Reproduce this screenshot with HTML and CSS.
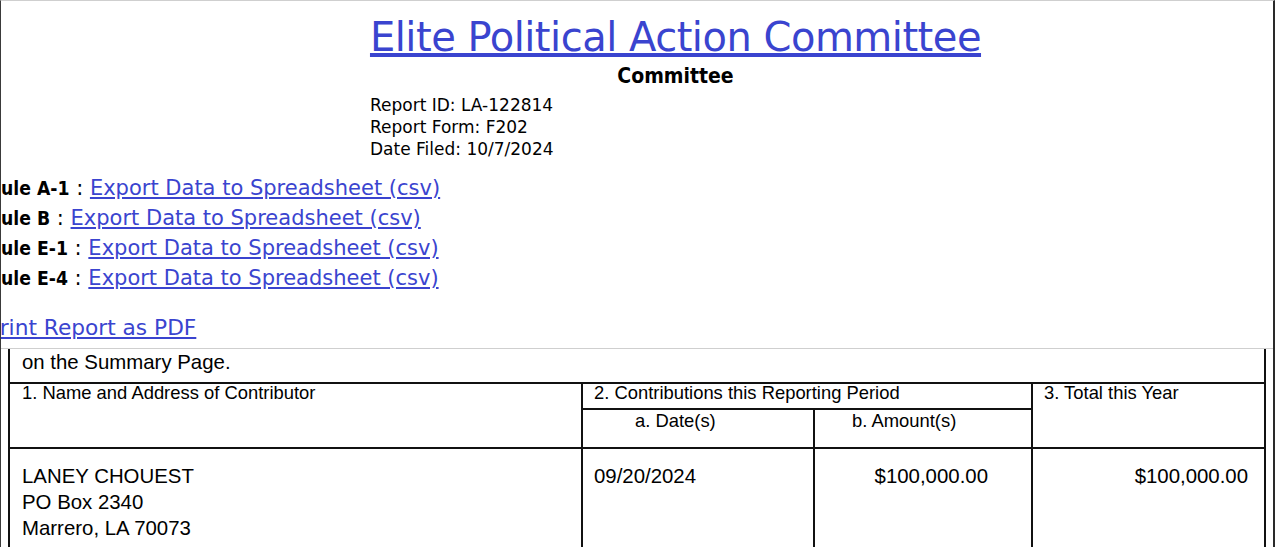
FILE: index.html
```html
<!DOCTYPE html>
<html>
<head>
<meta charset="utf-8">
<link rel="stylesheet" href="styles.css">
</head>
<body>
<div class="frame">
  <div class="top">
    <div class="head">
      <a class="title" href="#">Elite Political Action Committee</a>
      <div class="subtitle">Committee</div>
    </div>
    <div class="info">
      <div>Report ID: LA-122814</div>
      <div>Report Form: F202</div>
      <div>Date Filed: 10/7/2024</div>
    </div>
    <div class="schedules">
      <div class="sched"><b class="lbl">Schedule A-1</b> : <a href="#">Export Data to Spreadsheet (csv)</a></div>
      <div class="sched"><b class="lbl">Schedule B</b> : <a href="#">Export Data to Spreadsheet (csv)</a></div>
      <div class="sched"><b class="lbl">Schedule E-1</b> : <a href="#">Export Data to Spreadsheet (csv)</a></div>
      <div class="sched"><b class="lbl">Schedule E-4</b> : <a href="#">Export Data to Spreadsheet (csv)</a></div>
    </div>
    <div class="print"><a href="#">Print Report as PDF</a></div>
  </div>
  <div class="doc">
    <table class="form">
      <colgroup>
        <col class="w1">
        <col class="w2">
        <col class="w3">
        <col class="w4">
      </colgroup>
      <tr>
        <td class="note" colspan="4">on the Summary Page.</td>
      </tr>
      <tr class="hdr">
        <td class="c1" rowspan="2">1. Name and Address of Contributor</td>
        <td class="c2" colspan="2">2. Contributions this Reporting Period</td>
        <td class="c4" rowspan="2">3. Total this Year</td>
      </tr>
      <tr class="hdr2">
        <td class="c2a">a. Date(s)</td>
        <td class="c2b">b. Amount(s)</td>
      </tr>
      <tr class="data">
        <td class="d1">LANEY CHOUEST<br>PO Box 2340<br>Marrero, LA 70073</td>
        <td class="d2">09/20/2024</td>
        <td class="d3">$100,000.00</td>
        <td class="d4">$100,000.00</td>
      </tr>
    </table>
  </div>
</div>
</body>
</html>
```
FILE: styles.css
```css
html, body {
  margin: 0;
  padding: 0;
  background: #fff;
}
body {
  width: 1275px;
  height: 547px;
  overflow: hidden;
}
.frame {
  box-sizing: border-box;
  height: 547px;
  border-top: 1px solid #cfcfcf;
  border-left: 1px solid #3a3a3a;
  border-right: 2px solid #2a2a2a;
  overflow: hidden;
}
.top {
  margin-left: -61px;
  width: 1471px;
  height: 347px;
  font-family: "DejaVu Sans", sans-serif;
  color: #000;
}
.top a {
  color: #3a44cf;
}
.head {
  text-align: center;
  padding-top: 12px;
}
.title {
  font-size: 40px;
  letter-spacing: -0.5px;
  line-height: 48px;
  display: inline-block;
}
.subtitle {
  font-family: "DejaVu Sans Condensed", "DejaVu Sans", sans-serif;
  font-stretch: condensed;
  font-weight: bold;
  font-size: 21px;
  line-height: 24px;
  margin-top: 3px;
}
.info {
  margin-left: 430px;
  margin-top: 6px;
  font-size: 17px;
  line-height: 22px;
}
.schedules {
  margin-top: 13px;
  margin-left: 2px;
  font-size: 21px;
  line-height: 30px;
}
.sched {
  height: 30px;
}
.lbl {
  font-family: "DejaVu Sans Condensed", "DejaVu Sans", sans-serif;
  font-stretch: condensed;
  font-size: 19.2px;
  line-height: 20px;
}
.print {
  margin-top: 20px;
  font-size: 21.7px;
  line-height: 30px;
  margin-left: 47px;
}
.doc {
  border-top: 1px solid #cfcfcf;
  padding-left: 7px;
  overflow: hidden;
}
.form {
  width: 1256px;
  table-layout: fixed;
  border-collapse: collapse;
  font-family: "Liberation Sans", Arial, sans-serif;
  color: #000;
}
.w1 { width: 573px; }
.w2 { width: 232px; }
.w3 { width: 218px; }
.w4 { width: 233px; }
.form td {
  border: 2px solid #111;
  vertical-align: top;
  padding: 0 12px;
}
.form td.note {
  border-top: none;
  font-size: 20.4px;
  line-height: 24px;
  padding-top: 1px;
  padding-bottom: 8px;
}
.hdr td, .hdr2 td {
  font-size: 18.4px;
  line-height: 18px;
}
.form .c2 {
  padding: 0 11px 6px;
}
.form .c4 {
  padding-left: 11px;
}
.form .hdr2 td {
  padding-top: 2px;
  padding-bottom: 17px;
}
.form .c2a {
  padding-left: 52px;
}
.form .c2b {
  padding-left: 37px;
}
.data td {
  font-size: 20.4px;
  line-height: 26px;
  height: 90px;
}
.form .data td {
  padding-top: 14px;
}
.form .d2 {
  padding-left: 11px;
}
.d3, .d4 {
  text-align: right;
}
.form .d3 {
  padding-right: 43px;
}
.form .d4 {
  padding-right: 16px;
}
```
